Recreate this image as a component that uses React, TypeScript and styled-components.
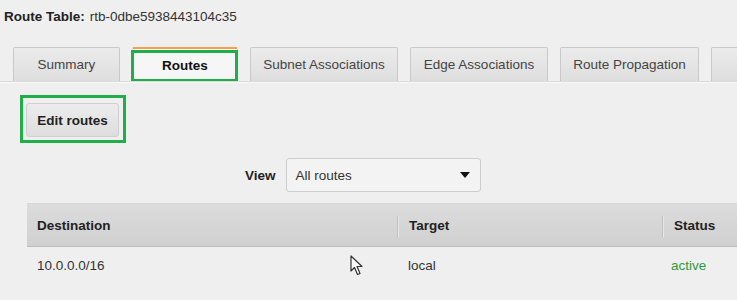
import React from "react";
import styled, { createGlobalStyle } from "styled-components";

const GlobalStyle = createGlobalStyle`
  html, body { margin: 0; padding: 0; }
  body {
    background: #efefef;
    font-family: "Liberation Sans", Arial, sans-serif;
    color: #333;
    overflow: hidden;
  }
`;

const Page = styled.div`
  position: relative;
  width: 737px;
  height: 300px;
  display: flex;
  flex-direction: column;
`;

const TitleBar = styled.div`
  height: 32px;
  display: flex;
  align-items: center;
  padding-left: 4px;
  font-size: 13.5px;
  color: #333;
`;

const TitleLabel = styled.span`
  font-weight: bold;
  color: #222;
  margin-right: 5px;
`;

const TabBar = styled.div`
  margin-top: 15px;
  padding-left: 13px;
  display: flex;
  gap: 12px;
  border-bottom: 1px solid #dadada;
  box-shadow: 0 1px 0 #f8f8f8;
  overflow: hidden;
`;

const Tab = styled.div<{ $w: number; $active?: boolean }>`
  position: relative;
  flex: 0 0 ${(p) => p.$w}px;
  height: 34px;
  box-sizing: border-box;
  display: flex;
  align-items: center;
  justify-content: center;
  font-size: 13.5px;
  white-space: nowrap;
  border: 1px solid ${(p) => (p.$active ? "#dcdcdc" : "#c9c9c9")};
  border-bottom: none;
  border-radius: 2px 2px 0 0;
  color: ${(p) => (p.$active ? "#111" : "#444")};
  font-weight: ${(p) => (p.$active ? "bold" : "normal")};
  background: ${(p) =>
    p.$active
      ? "#f6f6f6"
      : "linear-gradient(#ebebeb, #dedede)"};
  border-top: ${(p) => (p.$active ? "2px solid #eea24e" : "1px solid #c9c9c9")};
`;

const TabHighlight = styled.div`
  position: absolute;
  top: 1px;
  left: -2px;
  right: -1px;
  bottom: -1px;
  border: 3px solid #1fae48;
  pointer-events: none;
`;

const Toolbar = styled.div`
  margin-top: 13px;
  padding-left: 20px;
  display: flex;
`;

const Highlight = styled.div`
  border: 3px solid #1fae48;
  padding: 5px 4px 3px 3px;
  display: flex;
`;

const Button = styled.button`
  width: 93px;
  height: 34px;
  border: 1px solid #cfcfcf;
  border-radius: 3px;
  background: linear-gradient(#ececec, #dedede);
  font-family: "Liberation Sans", Arial, sans-serif;
  font-size: 13.5px;
  font-weight: bold;
  color: #222;
  padding: 0;
`;

const ViewRow = styled.div`
  margin-top: 15px;
  padding-left: 245px;
  display: flex;
  align-items: center;
  gap: 10px;
`;

const ViewLabel = styled.span`
  font-size: 13.5px;
  font-weight: bold;
  color: #222;
`;

const Select = styled.div`
  width: 195px;
  height: 34px;
  box-sizing: border-box;
  border: 1px solid #cdcdcd;
  border-radius: 3px;
  background: #f3f3f3;
  display: flex;
  align-items: center;
  justify-content: space-between;
  padding: 0 10px 0 9px;
  font-size: 13.5px;
  color: #333;
`;

const Caret = styled.span`
  width: 0;
  height: 0;
  border-left: 5.5px solid transparent;
  border-right: 5.5px solid transparent;
  border-top: 6px solid #111;
`;

const Table = styled.div`
  margin-top: 11px;
  margin-left: 27px;
  display: grid;
  grid-template-columns: 370px 265px 1fr;
`;

const HeadCell = styled.div<{ $divider?: boolean }>`
  position: relative;
  height: 44px;
  box-sizing: border-box;
  display: flex;
  align-items: center;
  padding-left: ${(p) => (p.$divider ? 12 : 10)}px;
  background: linear-gradient(#dcdcdc, #d0d0d0);
  border-top: 1px solid #d6d6d6;
  border-bottom: 1px solid #bdbdbd;
  font-size: 13.5px;
  font-weight: bold;
  color: #222;
  &::before {
    content: "";
    display: ${(p) => (p.$divider ? "block" : "none")};
    position: absolute;
    left: 0;
    top: 12px;
    bottom: 8px;
    width: 1px;
    background: #c2c2c2;
    box-shadow: 1px 0 0 #e6e6e6;
  }
`;

const Cell = styled.div<{ $status?: boolean; $pad?: number }>`
  height: 36px;
  display: flex;
  align-items: center;
  padding-left: ${(p) => p.$pad ?? 10}px;
  font-size: 13.5px;
  color: ${(p) => (p.$status ? "#2e9a3c" : "#333")};
`;

const Cursor = styled.svg`
  position: absolute;
  left: 350px;
  top: 255px;
  width: 14px;
  height: 21px;
`;

export default function App() {
  return (
    <>
      <GlobalStyle />
      <Page>
        <TitleBar>
          <TitleLabel>Route Table:</TitleLabel>
          rtb-0dbe5938443104c35
        </TitleBar>
        <TabBar>
          <Tab $w={107}>Summary</Tab>
          <Tab $w={106} $active>
            Routes
            <TabHighlight />
          </Tab>
          <Tab $w={148}>Subnet Associations</Tab>
          <Tab $w={138}>Edge Associations</Tab>
          <Tab $w={139}>Route Propagation</Tab>
          <Tab $w={60} />
        </TabBar>
        <Toolbar>
          <Highlight>
            <Button>Edit routes</Button>
          </Highlight>
        </Toolbar>
        <ViewRow>
          <ViewLabel>View</ViewLabel>
          <Select>
            All routes
            <Caret />
          </Select>
        </ViewRow>
        <Table>
          <HeadCell>Destination</HeadCell>
          <HeadCell $divider>Target</HeadCell>
          <HeadCell $divider>Status</HeadCell>
          <Cell>10.0.0.0/16</Cell>
          <Cell $pad={11}>local</Cell>
          <Cell $status $pad={9}>active</Cell>
        </Table>
        <Cursor viewBox="0 0 14 21">
          <path
            d="M1 1 L1 16 L4.5 12.5 L7.5 19.5 L10 18.5 L7 11.5 L12 11.5 Z"
            fill="#fff"
            stroke="#333"
            strokeWidth="1.2"
            strokeLinejoin="round"
          />
        </Cursor>
      </Page>
    </>
  );
}
